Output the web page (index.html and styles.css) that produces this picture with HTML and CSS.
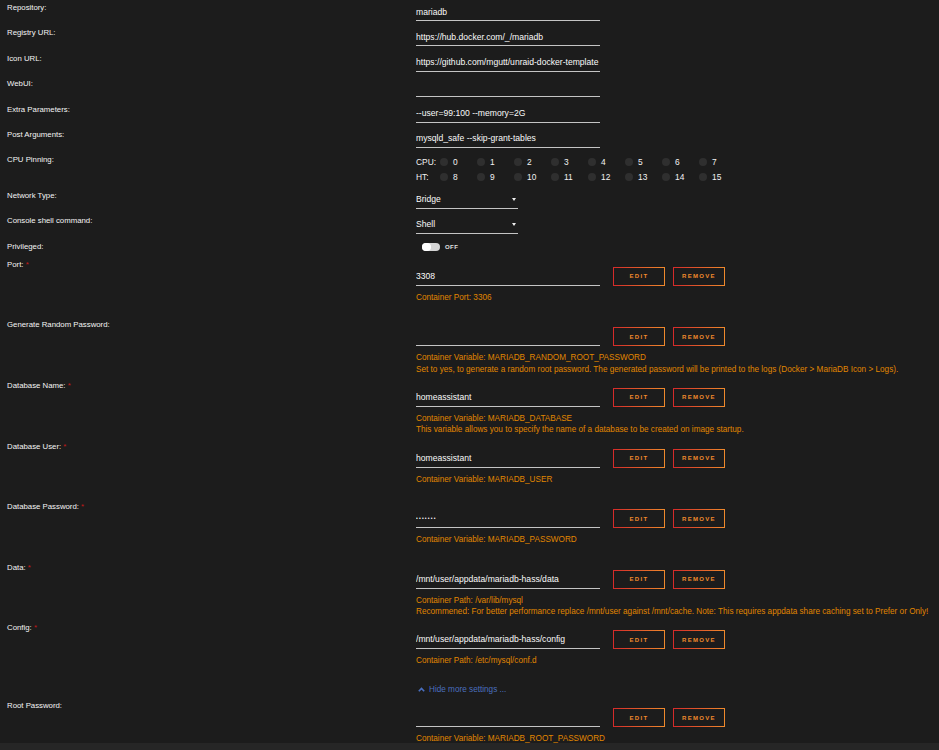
FILE: index.html
```html
<!DOCTYPE html>
<html lang="en">
  <head>
    <meta charset="UTF-8" />
    <meta name="viewport" content="width=device-width, initial-scale=1.0" />
    <title>Update Container</title>
    <link rel="stylesheet" href="styles.css">
  </head>
  <body>
    <form class="template">
      <!-- basic settings -->
      <div class="row">
        <label class="key">Repository:</label>
        <div class="val"><input class="field" type="text" value="mariadb" /></div>
      </div>
      <div class="row">
        <label class="key">Registry URL:</label>
        <div class="val"><input class="field" type="text" value="https://hub.docker.com/_/mariadb" /></div>
      </div>
      <div class="row">
        <label class="key">Icon URL:</label>
        <div class="val"><input class="field" type="text" value="https://github.com/mgutt/unraid-docker-template" /></div>
      </div>
      <div class="row">
        <label class="key">WebUI:</label>
        <div class="val"><input class="field" type="text" value="" /></div>
      </div>
      <div class="row">
        <label class="key">Extra Parameters:</label>
        <div class="val"><input class="field" type="text" value="--user=99:100 --memory=2G" /></div>
      </div>
      <div class="row">
        <label class="key">Post Arguments:</label>
        <div class="val"><input class="field" type="text" value="mysqld_safe --skip-grant-tables" /></div>
      </div>

      <div class="row cpu-row">
        <label class="key">CPU Pinning:</label>
        <div class="val">
          <div class="cpu-line">
            <span class="cpu-tag">CPU:</span>
            <span class="core"><i class="dot"></i>0</span>
            <span class="core"><i class="dot"></i>1</span>
            <span class="core"><i class="dot"></i>2</span>
            <span class="core"><i class="dot"></i>3</span>
            <span class="core"><i class="dot"></i>4</span>
            <span class="core"><i class="dot"></i>5</span>
            <span class="core"><i class="dot"></i>6</span>
            <span class="core"><i class="dot"></i>7</span>
          </div>
          <div class="cpu-line">
            <span class="cpu-tag">HT:</span>
            <span class="core"><i class="dot"></i>8</span>
            <span class="core"><i class="dot"></i>9</span>
            <span class="core"><i class="dot"></i>10</span>
            <span class="core"><i class="dot"></i>11</span>
            <span class="core"><i class="dot"></i>12</span>
            <span class="core"><i class="dot"></i>13</span>
            <span class="core"><i class="dot"></i>14</span>
            <span class="core"><i class="dot"></i>15</span>
          </div>
        </div>
      </div>

      <div class="row">
        <label class="key">Network Type:</label>
        <div class="val">
          <span class="sel"><select><option>Bridge</option><option>Host</option><option>None</option></select></span>
        </div>
      </div>
      <div class="row">
        <label class="key">Console shell command:</label>
        <div class="val">
          <span class="sel"><select><option>Shell</option><option>Bash</option></select></span>
        </div>
      </div>
      <div class="row priv-row">
        <label class="key">Privileged:</label>
        <div class="val">
          <span class="switch"><i class="knob"></i></span><span class="switch-text">OFF</span>
        </div>
      </div>

      <!-- ports, variables, paths -->
      <div class="row cfg">
        <label class="key">Port: <span class="req">*</span></label>
        <div class="val">
          <div class="line">
            <input class="field" type="text" value="3308" />
            <button type="button" class="btn">Edit</button>
            <button type="button" class="btn">Remove</button>
          </div>
          <p class="desc">Container Port: 3306</p>
        </div>
      </div>
      <div class="row cfg">
        <label class="key">Generate Random Password:</label>
        <div class="val">
          <div class="line">
            <input class="field" type="text" value="" />
            <button type="button" class="btn">Edit</button>
            <button type="button" class="btn">Remove</button>
          </div>
          <p class="desc">Container Variable: MARIADB_RANDOM_ROOT_PASSWORD<br />Set to yes, to generate a random root password. The generated password will be printed to the logs (Docker &gt; MariaDB Icon &gt; Logs).</p>
        </div>
      </div>
      <div class="row cfg">
        <label class="key">Database Name: <span class="req">*</span></label>
        <div class="val">
          <div class="line">
            <input class="field" type="text" value="homeassistant" />
            <button type="button" class="btn">Edit</button>
            <button type="button" class="btn">Remove</button>
          </div>
          <p class="desc">Container Variable: MARIADB_DATABASE<br />This variable allows you to specify the name of a database to be created on image startup.</p>
        </div>
      </div>
      <div class="row cfg">
        <label class="key">Database User: <span class="req">*</span></label>
        <div class="val">
          <div class="line">
            <input class="field" type="text" value="homeassistant" />
            <button type="button" class="btn">Edit</button>
            <button type="button" class="btn">Remove</button>
          </div>
          <p class="desc">Container Variable: MARIADB_USER</p>
        </div>
      </div>
      <div class="row cfg">
        <label class="key">Database Password: <span class="req">*</span></label>
        <div class="val">
          <div class="line">
            <input class="field" type="password" value="1234567" />
            <button type="button" class="btn">Edit</button>
            <button type="button" class="btn">Remove</button>
          </div>
          <p class="desc">Container Variable: MARIADB_PASSWORD</p>
        </div>
      </div>
      <div class="row cfg">
        <label class="key">Data: <span class="req">*</span></label>
        <div class="val">
          <div class="line">
            <input class="field" type="text" value="/mnt/user/appdata/mariadb-hass/data" />
            <button type="button" class="btn">Edit</button>
            <button type="button" class="btn">Remove</button>
          </div>
          <p class="desc">Container Path: /var/lib/mysql<br />Recommened: For better performance replace /mnt/user against /mnt/cache. Note: This requires appdata share caching set to Prefer or Only!</p>
        </div>
      </div>
      <div class="row cfg">
        <label class="key">Config: <span class="req">*</span></label>
        <div class="val">
          <div class="line">
            <input class="field" type="text" value="/mnt/user/appdata/mariadb-hass/config" />
            <button type="button" class="btn">Edit</button>
            <button type="button" class="btn">Remove</button>
          </div>
          <p class="desc">Container Path: /etc/mysql/conf.d</p>
        </div>
      </div>

      <div class="row more-row">
        <span></span>
        <a class="more" href="#">
          <svg width="7" height="5" viewBox="0 0 7 5"><path d="M0.8 4.2 L3.5 1.4 L6.2 4.2" fill="none" stroke="currentColor" stroke-width="1.6"/></svg>
          Hide more settings ...
        </a>
      </div>

      <div class="row cfg">
        <label class="key">Root Password:</label>
        <div class="val">
          <div class="line">
            <input class="field" type="text" value="" />
            <button type="button" class="btn">Edit</button>
            <button type="button" class="btn">Remove</button>
          </div>
          <p class="desc">Container Variable: MARIADB_ROOT_PASSWORD</p>
        </div>
      </div>
    </form>

    <div class="footer"></div>
  </body>
</html>
```

FILE: styles.css
```css
* {
  margin: 0;
  padding: 0;
  box-sizing: border-box;
}
body {
  background: #1c1c1c;
  color: #f2f2f2;
  font-family: "Liberation Sans", Arial, sans-serif;
  font-size: 8px;
  overflow: hidden;
}
.template {
  padding-top: 2px;
}
.row {
  display: grid;
  grid-template-columns: 416px 1fr;
  height: 25.4px;
}
.key {
  padding-left: 7px;
  line-height: 12px;
  font-size: 7.8px;
  color: #f4f4f4;
}
.req {
  color: #c41818;
}
.val {
  min-width: 0;
}

/* text inputs */
.field {
  display: block;
  width: 184px;
  height: 18px;
  margin-top: 1px;
  border: none;
  border-bottom: 1px solid #c4c4c4;
  background: transparent;
  color: #fafafa;
  font-family: inherit;
  font-size: 8.6px;
  outline: none;
}
.field[type="password"] {
  font-size: 5px;
  letter-spacing: 1.2px;
}

/* cpu pinning */
.cpu-row {
  height: 35.6px;
}
.cpu-line {
  display: flex;
  align-items: center;
  height: 15px;
  font-size: 8.4px;
}
.cpu-tag {
  width: 24px;
}
.core {
  display: flex;
  align-items: center;
  gap: 5px;
  width: 37px;
}
.dot {
  width: 8px;
  height: 8px;
  border-radius: 50%;
  background: #2f2f2f;
}

/* selects */
.sel {
  position: relative;
  display: block;
  width: 102px;
}
.sel select {
  appearance: none;
  display: block;
  width: 100%;
  height: 19px;
  border: none;
  border-bottom: 1px solid #c4c4c4;
  background: transparent;
  color: #fafafa;
  font-family: inherit;
  font-size: 8.6px;
  outline: none;
}
.sel::after {
  content: "";
  position: absolute;
  right: 2px;
  top: 8px;
  border-left: 2px solid transparent;
  border-right: 2px solid transparent;
  border-top: 3px solid #eee;
}

/* privileged toggle */
.priv-row {
  height: 18px;
}
.priv-row .val {
  display: flex;
  align-items: center;
  height: 12px;
}
.switch {
  display: block;
  width: 18px;
  height: 8px;
  margin-left: 6px;
  border-radius: 4px;
  background: #d4d4d4;
}
.knob {
  display: block;
  width: 9px;
  height: 8px;
  border-radius: 4px;
  background: #fff;
}
.switch-text {
  margin-left: 5px;
  font-size: 6px;
  font-weight: bold;
  letter-spacing: 0.4px;
  color: #e0e0e0;
}

/* port / variable / path rows */
.cfg {
  height: 60.6px;
}
.line {
  display: flex;
  align-items: flex-start;
  margin-top: 8px;
}
.line .field {
  margin-top: 0;
  height: 19px;
}
.btn {
  width: 52px;
  height: 19px;
  margin-left: 8px;
  border: 1px solid;
  border-image: linear-gradient(90deg, #d42a2a, #ef8a2c) 1;
  background: #1c1c1c;
  color: #f08a2c;
  font-family: inherit;
  font-size: 6px;
  font-weight: bold;
  letter-spacing: 1.3px;
  text-transform: uppercase;
  cursor: pointer;
}
.line .btn:first-of-type {
  margin-left: 13px;
}
.desc {
  margin-top: 6px;
  line-height: 11.5px;
  font-size: 8.2px;
  color: #e08600;
  white-space: nowrap;
}

/* show / hide toggle */
.more-row {
  height: 17.4px;
  padding-top: 1px;
}
.more {
  display: flex;
  align-items: center;
  gap: 4px;
  height: 12px;
  padding-left: 2px;
  font-size: 8.2px;
  color: #4a6fbf;
  text-decoration: none;
}

.footer {
  position: fixed;
  left: 0;
  right: 0;
  bottom: 0;
  height: 7px;
  background: #262626;
}
```
